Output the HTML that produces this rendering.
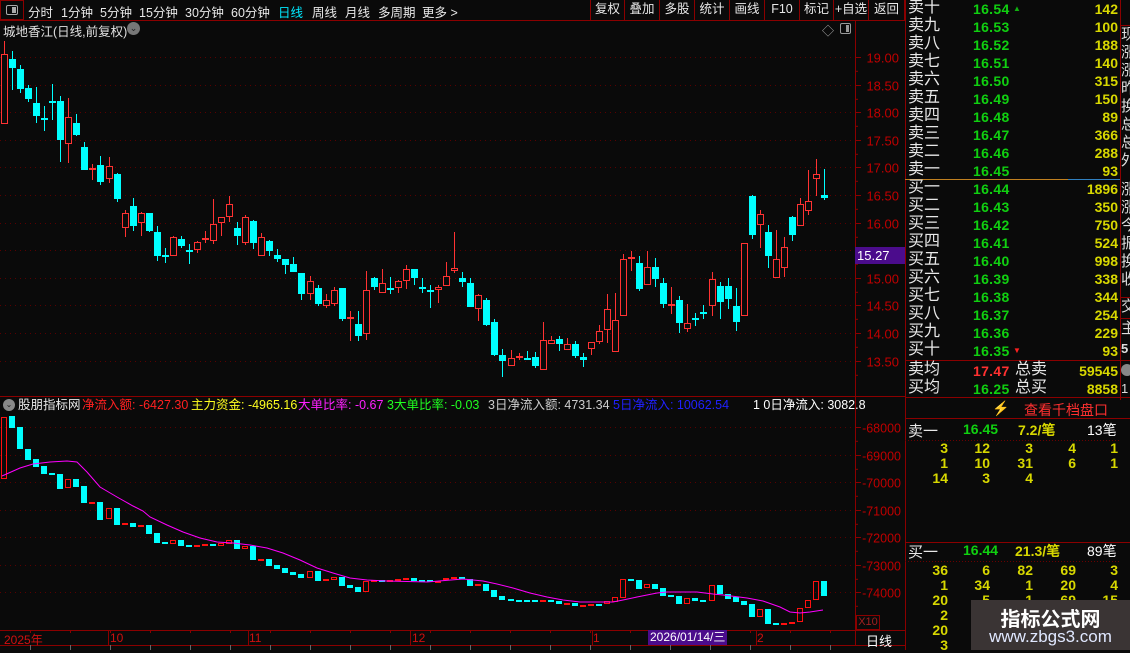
<!DOCTYPE html>
<html><head><meta charset="utf-8"><style>
*{margin:0;padding:0;box-sizing:border-box}
body{width:1130px;height:650px;background:#0a0a0a;overflow:hidden;position:relative;font-family:"Liberation Sans","Noto Sans CJK SC",sans-serif;color:#ddd}
.a{position:absolute;white-space:nowrap}
.tb{font-size:12.5px;color:#e8e8e8;top:2px}
.btn{position:absolute;top:0;height:20px;border-left:1px solid #8b0000;font-size:12.5px;color:#e8e8e8;text-align:center;line-height:19px}
.ob{position:absolute;left:905px;width:215px;font-size:15px}
.ob div{position:absolute;height:18px;line-height:18px}
.lb{left:3px;color:#e8e8e8;font-size:16px}
.pr{left:68px;color:#10d010;font-size:14px;font-weight:bold;letter-spacing:.3px}
.qt{right:2px;color:#d8d800;font-size:14px;font-weight:bold;text-align:right}
.rc{position:absolute;left:1121px;width:9px;overflow:hidden;color:#ddd;font-size:15px;line-height:18px}
.n{position:absolute;color:#d8d800;font-size:14px;font-weight:bold;text-align:right;width:30px}
</style></head><body>
<svg id="sv" width="1130" height="650" style="position:absolute;left:0;top:0"></svg>

<!-- toolbar -->
<div class="a" style="left:0;top:0;width:24px;height:20px;border:1px solid #8b0000"></div>
<div class="a" style="left:6px;top:5px;width:12px;height:10px;border:1px solid #aaa;border-radius:2px"><div style="position:absolute;right:1px;top:1px;width:4px;height:6px;background:#aaa"></div></div>
<div class="a tb" style="left:28px">分时</div>
<div class="a tb" style="left:61px">1分钟</div>
<div class="a tb" style="left:100px">5分钟</div>
<div class="a tb" style="left:139px">15分钟</div>
<div class="a tb" style="left:185px">30分钟</div>
<div class="a tb" style="left:231px">60分钟</div>
<div class="a tb" style="left:278px;color:#00e8ff">日线</div>
<div class="a tb" style="left:312px">周线</div>
<div class="a tb" style="left:345px">月线</div>
<div class="a tb" style="left:378px">多周期</div>
<div class="a tb" style="left:422px">更多 &gt;</div>
<div class="btn" style="left:590px;width:34px">复权</div>
<div class="btn" style="left:624px;width:35px">叠加</div>
<div class="btn" style="left:659px;width:35px">多股</div>
<div class="btn" style="left:694px;width:35px">统计</div>
<div class="btn" style="left:729px;width:35px">画线</div>
<div class="btn" style="left:764px;width:35px">F10</div>
<div class="btn" style="left:799px;width:34px">标记</div>
<div class="btn" style="left:833px;width:35px">+自选</div>
<div class="btn" style="left:868px;width:37px;border-right:1px solid #8b0000">返回</div>

<div class="a" style="left:3px;top:21px;font-size:12.5px;color:#e0e0e0">城地香江(日线,前复权)</div>
<div class="a" style="left:127px;top:22px;width:13px;height:13px;border-radius:50%;background:#777;color:#222;font-size:9px;text-align:center;line-height:13px">⌄</div>
<div class="a" style="left:822px;top:22px;color:#aaa;font-size:12px">◇</div>
<div class="a" style="left:840px;top:23px;width:11px;height:11px;border:1px solid #999;border-radius:2px"><div style="position:absolute;right:1px;top:1px;width:3px;height:7px;background:#999"></div></div>

<!-- indicator header -->
<div class="a" style="left:3px;top:399px;width:12px;height:12px;border-radius:50%;background:#888;color:#222;font-size:8px;text-align:center;line-height:12px">⌄</div>
<div class="a" style="left:18px;top:398px;font-size:12.5px;line-height:15px">
<span style="color:#e8e8e8">股朋指标网</span>
<span style="position:absolute;left:64px;color:#ff2020">净流入额: -6427.30</span>
<span style="position:absolute;left:173px;color:#ffff20">主力资金: -4965.16</span>
<span style="position:absolute;left:280px;color:#ff20ff">大单比率: -0.67</span>
<span style="position:absolute;left:369px;color:#20ff20">3大单比率: -0.03</span>
<span style="position:absolute;left:470px;color:#ccc">3日净流入额: 4731.34</span>
<span style="position:absolute;left:595px;color:#2020ff">5日净流入: 10062.54</span>
<span style="position:absolute;left:735px;color:#fff">1 0日净流入: 3082.8</span>
</div>

<!-- date axis -->
<div class="a" style="left:4px;top:631px;font-size:12px;color:#d01010">2025年</div>
<div class="a" style="left:110px;top:631px;font-size:12px;color:#d01010">10</div>
<div class="a" style="left:249px;top:631px;font-size:12px;color:#d01010">11</div>
<div class="a" style="left:412px;top:631px;font-size:12px;color:#d01010">12</div>
<div class="a" style="left:593px;top:631px;font-size:12px;color:#d01010">1</div>
<div class="a" style="left:648px;top:630px;width:79px;height:15px;background:#4b0c8c;font-size:12px;color:#fff;line-height:15px;padding-left:2px">2026/01/14/三</div>
<div class="a" style="left:757px;top:631px;font-size:12px;color:#d01010">2</div>
<div class="a" style="left:856px;top:615px;width:24px;height:15px;border:1px solid #8b0000;font-size:11px;color:#a02020;line-height:13px;text-align:center">X10</div>
<div class="a" style="left:866px;top:631px;font-size:13px;color:#fff">日线</div>
<div class="a" style="left:855px;top:247px;width:50px;height:17px;background:#4b0c8c;font-size:13px;color:#fff;line-height:17px;padding-left:2px">15.27</div>

<!-- order book -->
<div class="ob" style="top:0;height:400px" id="ob"></div>
<div class="rc" style="top:26px">现<br>涨<br>涨<br>昨<br>换<br>总<br>总<br>外</div>
<div class="rc" style="top:181px">涨<br>涨<br>今<br>振<br>换<br>收</div>
<div class="rc" style="top:298px">交</div>
<div class="rc" style="top:320px">主</div>
<div class="rc" style="top:340px;font-weight:bold;font-size:13px">5</div>
<div class="rc" style="top:363px"><span style="display:inline-block;width:12px;height:12px;border-radius:50%;background:#888"></span></div>
<div class="rc" style="top:380px;font-size:13px">1</div>

<div class="a" style="left:992px;top:400px;color:#6a6020;font-size:14px">⚡</div>
<div class="a" style="left:1024px;top:400px;color:#ff3030;font-size:14px">查看千档盘口</div>

<div class="a" style="left:908px;top:420px;font-size:15px;color:#e8e8e8">卖一</div>
<div class="a" style="left:963px;top:421px;font-size:14px;color:#10d010;font-weight:bold">16.45</div>
<div class="a" style="left:1018px;top:420px;font-size:14px;color:#d8d800;font-weight:bold">7.2/笔</div>
<div class="a" style="left:1087px;top:420px;font-size:14px;color:#fff">13笔</div>
<div class="a" style="left:908px;top:541px;font-size:15px;color:#e8e8e8">买一</div>
<div class="a" style="left:963px;top:542px;font-size:14px;color:#10d010;font-weight:bold">16.44</div>
<div class="a" style="left:1015px;top:541px;font-size:14px;color:#d8d800;font-weight:bold">21.3/笔</div>
<div class="a" style="left:1087px;top:541px;font-size:14px;color:#fff">89笔</div>
<div id="nums"></div>

<div class="a" style="left:971px;top:600px;width:159px;height:50px;background:#3a3434">
<div style="position:absolute;left:0;width:159px;top:3px;text-align:center;font-size:20px;font-weight:bold;color:#fff">指标公式网</div>
<div style="position:absolute;left:0;width:159px;top:27px;text-align:center;font-size:17px;color:#e0e8ff">www.zbgs3.com</div>
</div>

<script>
var S='',dr='#8b0000';
function L(x1,y1,x2,y2,c,w,d){S+='<line x1="'+x1+'" y1="'+y1+'" x2="'+x2+'" y2="'+y2+'" stroke="'+c+'" stroke-width="'+(w||1)+'"'+(d?' stroke-dasharray="'+d+'"':'')+'/>';}
function T(x,y,t,c,s,a){S+='<text x="'+x+'" y="'+y+'" fill="'+c+'" font-size="'+s+'" font-family="Liberation Sans, Noto Sans CJK SC, sans-serif"'+(a?' text-anchor="'+a+'"':'')+'>'+t+'</text>';}
// frame lines
L(0,20.5,905,20.5,dr);L(0,396.5,905,396.5,dr);L(855.5,20,855.5,645,dr);L(905.5,0,905.5,650,dr);
L(0,630.5,905,630.5,dr);L(0,645.5,905,645.5,dr);L(1120.5,0,1120.5,400,dr);
// price grid
var pl=['19.00','18.50','18.00','17.50','17.00','16.50','16.00','15.50','15.00','14.50','14.00','13.50'];
for(var i=0;i<12;i++){var y=Math.round(57+i*27.6)+.5;L(0,y,855,y,'#5a0000',1,'1 4');L(855,y,861,y,dr);if(i!=7)T(899,y+5,pl[i],'#c00000',13,'end');L(855,y+13.8,858,y+13.8,dr);}
var bl=['-68000','-69000','-70000','-71000','-72000','-73000','-74000'];
for(var i=0;i<7;i++){var y=Math.round(427+i*27.5)+.5;L(0,y,855,y,'#5a0000',1,'1 4');L(855,y,861,y,dr);L(855,y+13.8,858,y+13.8,dr);T(901,y+5,bl[i],'#c00000',12.5,'end');}
// date ticks
[108,248,410,592,756].forEach(function(x){L(x+.5,630,x+.5,645,dr);});
for(var x=30;x<855;x+=40){L(x+.5,630,x+.5,633,dr);L(x+.5,645,x+.5,650,'#666');}
var C='#00ffff',R='#ff3232';
var K=[['r',54,124,41,124],['c',59,68,51,90],['c',69,89,65,93],['c',88,99,85,102],['c',103,116,87,123],['c',118,119,106,131],['c',101,102,84,120],['c',101,140,96,162],['r',117,144,98,163],['c',123,135,114,136],['c',147,170,142,170],['r',168,170,164,180],['c',165,182,156,185],['r',166,179,157,183],['c',174,199,173,202],['r',213,228,210,237],['c',206,226,198,231],['r',213,223,212,236],['c',213,231,213,232],['c',232,256,226,261],['c',255,256,248,263],['r',237,256,236,256],['c',239,246,236,248],['c',250,251,244,264],['r',242,250,241,253],['r',238,239,231,243],['r',224,241,199,244],['r',217,223,217,236],['r',204,217,196,222],['c',228,236,222,245],['r',217,243,215,245],['c',221,243,220,249],['r',237,256,233,256],['c',241,251,240,256],['c',255,259,249,262],['c',259,265,259,274],['c',264,272,257,272],['c',273,294,273,300],['r',281,294,276,300],['c',288,304,285,306],['r',300,306,294,308],['r',290,304,287,306],['c',288,319,288,321],['r',317,318,311,341],['c',324,336,311,341],['r',290,334,271,340],['c',278,287,277,290],['r',283,293,269,293],['c',288,289,277,294],['r',281,288,280,293],['r',269,281,265,289],['c',269,278,269,285],['c',287,288,278,293],['c',290,291,285,308],['r',287,290,285,303],['r',276,286,262,286],['r',268,271,232,273],['c',278,282,272,287],['c',283,307,278,307],['r',295,309,294,321],['c',300,325,298,326],['c',322,355,319,356],['c',355,361,349,377],['r',358,366,350,366],['r',356,358,353,360],['c',358,359,351,360],['c',357,366,352,368],['r',340,370,322,370],['r',340,344,336,344],['c',339,344,336,351],['r',344,350,338,350],['c',344,356,341,358],['c',357,360,353,367],['r',342,349,342,355],['r',331,342,325,344],['r',309,330,294,343],['r',320,352,293,352],['r',259,316,254,316],['r',257,259,251,271],['c',263,289,256,291],['r',267,285,251,285],['c',267,279,258,287],['c',283,304,278,308],['r',304,306,287,314],['c',300,323,296,333],['r',323,329,304,332],['c',318,320,313,326],['c',312,314,305,319],['r',279,306,272,316],['c',286,302,282,319],['c',286,299,278,309],['c',306,322,288,331],['r',243,316,243,316],['c',196,235,195,239],['r',214,225,210,248],['c',232,256,225,268],['r',259,278,230,278],['r',247,268,237,277],['c',217,235,216,241],['r',204,226,198,226],['r',201,211,170,215],['r',174,179,159,196],['c',195,198,169,200]];
K.forEach(function(k,i){var cx=Math.round(4+i*8.04),col=k[0]=='r'?R:C,h=Math.max(k[2]-k[1],1);
 L(cx+.5,k[3],cx+.5,k[1],col);L(cx+.5,k[1]+h,cx+.5,Math.max(k[4],k[1]+h),col);
 if(k[0]=='r'&&h>2)S+='<rect x="'+(cx-2.5)+'" y="'+(k[1]+.5)+'" width="6" height="'+(h-1)+'" fill="#0a0a0a" stroke="'+R+'"/>';
 else S+='<rect x="'+(cx-3)+'" y="'+k[1]+'" width="7" height="'+(h<2?2:h)+'" fill="'+col+'"/>';});
var B=[['r',417,479],['c',416,428],['c',427,449],['c',449,460],['c',459,467],['c',466,474],['c',473,475],['c',474,489],['r',479,488],['c',479,487],['c',486,503],['f',502,503],['c',502,520],['r',508,519],['c',508,525],['f',523,525],['c',523,527],['f',525,527],['c',525,534],['c',533,543],['c',542,544],['r',540,544],['c',540,546],['c',545,547],['f',545,547],['f',544,546],['c',544,546],['r',543,546],['r',540,544],['c',540,549],['r',546,549],['c',546,560],['f',559,560],['c',559,566],['c',565,569],['c',568,573],['c',572,575],['c',574,578],['r',571,578],['c',571,581],['f',579,581],['r',577,580],['c',577,586],['c',585,588],['c',587,592],['r',581,592],['f',580,581],['c',580,581],['f',580,581],['f',579,580],['f',578,580],['c',578,581],['c',580,582],['c',580,582],['f',581,582],['r',578,580],['f',577,579],['c',577,579],['c',579,586],['f',584,586],['c',584,591],['c',590,597],['c',596,600],['c',599,601],['c',600,601],['c',600,601],['c',600,602],['f',600,602],['c',600,602],['c',601,604],['f',603,604],['c',603,606],['f',605,606],['f',604,606],['c',604,605],['r',601,604],['r',597,602],['r',579,598],['c',579,581],['c',580,589],['r',584,588],['c',584,589],['c',588,596],['c',595,597],['c',596,604],['r',598,604],['c',598,601],['c',600,601],['r',585,601],['c',585,594],['c',594,599],['c',597,602],['c',601,605],['c',604,617],['r',609,617],['c',609,624],['c',623,625],['f',623,625],['f',622,624],['r',608,622],['r',600,608],['r',581,600],['c',581,596]];
B.forEach(function(k,i){var cx=Math.round(4+i*8.04),h=Math.max(k[2]-k[1],2);
 if(k[0]=='r')S+='<rect x="'+(cx-2.5)+'" y="'+(k[1]+.5)+'" width="5" height="'+(h-1)+'" fill="none" stroke="#ff1010"/>';
 else S+='<rect x="'+(cx-3)+'" y="'+k[1]+'" width="6" height="'+h+'" fill="'+(k[0]=='c'?C:'#ff1010')+'"/>';});
var M=[[2,476],[20,468],[33,464],[50,462],[67,461],[77,462],[87,472],[100,487],[117,497],[133,506],[143,511],[150,517],[167,525],[183,532],[200,538],[217,542],[233,543],[250,545],[267,548],[283,553],[300,560],[317,568],[333,573],[350,578],[367,580],[387,581],[427,582],[463,579],[483,581],[497,584],[513,588],[530,593],[547,597],[563,600],[580,602],[613,602],[623,600],[637,597],[657,593],[667,592],[697,592],[713,594],[723,595],[747,598],[763,601],[780,607],[790,612],[800,613],[810,612],[823,610]];
S+='<polyline fill="none" stroke="#ff00ff" stroke-width="1" points="'+M.map(function(p){return p.join(',')}).join(' ')+'"/>';
// order book lines
L(905,179.5,1068,179.5,'#c08020');L(1068,179.5,1120,179.5,'#3080c0');
L(905,360.5,1130,360.5,dr);L(905,397.5,1130,397.5,dr);L(905,418.5,1130,418.5,dr);
L(905,440.5,1120,440.5,'#6a0000',1,'1 2');L(905,542.5,1130,542.5,dr);L(905,561.5,1120,561.5,'#6a0000',1,'1 2');
L(1120,25.5,1130,25.5,dr);L(1120,297.5,1130,297.5,dr);L(1120,318.5,1130,318.5,dr);
document.getElementById('sv').innerHTML=S;
// order book text
var ob='',sl=['十','九','八','七','六','五','四','三','二','一'],sq=[142,100,188,140,315,150,89,366,288,93],bq=[1896,350,750,524,998,338,344,254,229,93];
for(var i=0;i<10;i++){var y=i*18;ob+='<div class="lb" style="top:'+(y-1)+'px">卖'+sl[i]+'</div><div class="pr" style="top:'+y+'px">'+(16.54-i*0.01).toFixed(2)+'</div><div class="qt" style="top:'+y+'px">'+sq[i]+'</div>';}
for(var i=0;i<10;i++){var y=180+i*18;ob+='<div class="lb" style="top:'+(y-1)+'px">买'+sl[9-i]+'</div><div class="pr" style="top:'+y+'px">'+(16.44-i*0.01).toFixed(2)+'</div><div class="qt" style="top:'+y+'px">'+bq[i]+'</div>';}
ob+='<div style="left:108px;top:0;color:#10b010;font-size:8px">▲</div><div style="left:108px;top:342px;color:#ff2020;font-size:8px">▼</div>';
ob+='<div class="lb" style="top:361px">卖均</div><div class="pr" style="top:362px;color:#ff3030">17.47</div><div class="lb" style="left:110px;top:361px">总卖</div><div class="qt" style="top:362px">59545</div>';
ob+='<div class="lb" style="top:379px">买均</div><div class="pr" style="top:380px">16.25</div><div class="lb" style="left:110px;top:379px">总买</div><div class="qt" style="top:380px">8858</div>';
document.getElementById('ob').innerHTML=ob;
var cols=[948,990,1033,1076,1118],rows=[[440,[3,12,3,4,1]],[455,[1,10,31,6,1]],[470,[14,3,4,'','']],[562,[36,6,82,69,3]],[577,[1,34,1,20,4]],[592,[20,5,1,69,15]],[607,[2,'','','','']],[622,[20,'','','','']],[637,[3,'','','','']]],n='';
rows.forEach(function(r){r[1].forEach(function(v,j){n+='<div class="n" style="left:'+(cols[j]-30)+'px;top:'+r[0]+'px">'+v+'</div>';});});
document.getElementById('nums').innerHTML=n;
</script>
</body></html>
